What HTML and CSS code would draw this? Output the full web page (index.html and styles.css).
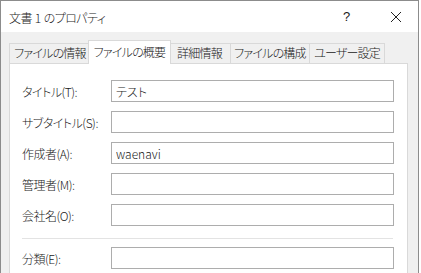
FILE: index.html
```html
<!DOCTYPE html>
<html lang="ja">
<head>
    <meta charset="UTF-8">
    <title>文書 1 のプロパティ</title>
    <link rel="stylesheet" href="styles.css">
</head>
<body>
    <div class="window">
        <div class="titlebar">
            <span class="title">文書 1 のプロパティ</span>
            <span class="help">?</span>
            <span class="close">
                <svg width="12" height="12" viewBox="0 0 12 12">
                    <path d="M1 1 L11 11 M11 1 L1 11" stroke="#222" stroke-width="1" fill="none"/>
                </svg>
            </span>
        </div>
        <div class="content">
            <div class="tabs">
                <div class="tab tab-info">ファイルの情報</div>
                <div class="tab active">ファイルの概要</div>
                <div class="tab tab-detail">詳細情報</div>
                <div class="tab tab-struct">ファイルの構成</div>
                <div class="tab tab-user">ユーザー設定</div>
            </div>
            <div class="panel">
                <div class="row">
                    <label for="title">タイトル(T):</label>
                    <input type="text" id="title" value="テスト">
                </div>
                <div class="row">
                    <label for="subtitle">サブタイトル(S):</label>
                    <input type="text" id="subtitle">
                </div>
                <div class="row">
                    <label for="author">作成者(A):</label>
                    <input type="text" id="author" value="waenavi">
                </div>
                <div class="row">
                    <label for="manager">管理者(M):</label>
                    <input type="text" id="manager">
                </div>
                <div class="row">
                    <label for="company">会社名(O):</label>
                    <input type="text" id="company">
                </div>
                <hr class="divider">
                <div class="row">
                    <label for="category">分類(E):</label>
                    <input type="text" id="category">
                </div>
            </div>
        </div>
    </div>
</body>
</html>
```

FILE: styles.css
```css
* {
    margin: 0;
    padding: 0;
    box-sizing: border-box;
}

body {
    width: 421px;
    height: 273px;
    overflow: hidden;
    background-color: #fff;
    font-family: "Noto Sans CJK JP", "Noto Sans", sans-serif;
    font-feature-settings: "palt";
    font-weight: 300;
    font-size: 12px;
    color: #1a1a1a;
}

.window {
    width: 419px;
    height: 273px;
    border: 1px solid #8c8c8c;
    border-bottom: none;
    background-color: #f0f0f0;
    display: flex;
    flex-direction: column;
}

.titlebar {
    height: 31px;
    background-color: #fff;
    display: flex;
    align-items: center;
    padding-left: 8px;
    flex-shrink: 0;
}

.title {
    flex: 1;
    font-size: 12px;
    letter-spacing: -0.6px;
    word-spacing: 1px;
    padding-top: 1px;
}

.help {
    width: 14px;
    margin-right: 33px;
    font-family: "Liberation Sans", sans-serif;
    font-size: 13px;
}

.close {
    display: flex;
    margin-right: 16px;
}

.content {
    flex: 1;
    padding: 9px 10px 0 8px;
}

.tabs {
    display: flex;
    height: 22px;
    align-items: flex-end;
}

.tab {
    height: 20px;
    line-height: 18px;
    letter-spacing: -0.8px;
    text-align: center;
    border: 1px solid #d9d9d9;
    border-bottom: none;
    border-right: none;
    background-color: #f0f0f0;
    white-space: nowrap;
}

.tab-info {
    width: 81px;
}

.tab-detail {
    width: 61px;
    border-left: none;
}

.tab-struct {
    width: 79px;
}

.tab-user {
    width: 76px;
    border-right: 1px solid #d9d9d9;
}

.tab.active {
    width: 83px;
    height: 24px;
    margin: 0 -2px -1px;
    line-height: 21px;
    background-color: #fff;
    border-right: 1px solid #d9d9d9;
    position: relative;
    z-index: 1;
}

.panel {
    background-color: #fff;
    border: 1px solid #d9d9d9;
    border-bottom: none;
    height: 220px;
    padding: 16px 13px 0 12px;
}

.row {
    display: flex;
    align-items: center;
    height: 22px;
    margin-bottom: 9px;
}

.row label {
    width: 89px;
    flex-shrink: 0;
    letter-spacing: -0.5px;
}

.row input {
    width: 283px;
    height: 22px;
    border: 1px solid #adadad;
    padding: 0 4px;
    font-family: "Noto Sans CJK JP", "Noto Sans", sans-serif;
    font-feature-settings: "palt";
    font-weight: 300;
    font-size: 12px;
    color: #1a1a1a;
    outline: none;
}

.divider {
    border: none;
    border-top: 1px solid #e3e3e3;
    margin: 12px 0 8px;
    width: 371px;
}
```
